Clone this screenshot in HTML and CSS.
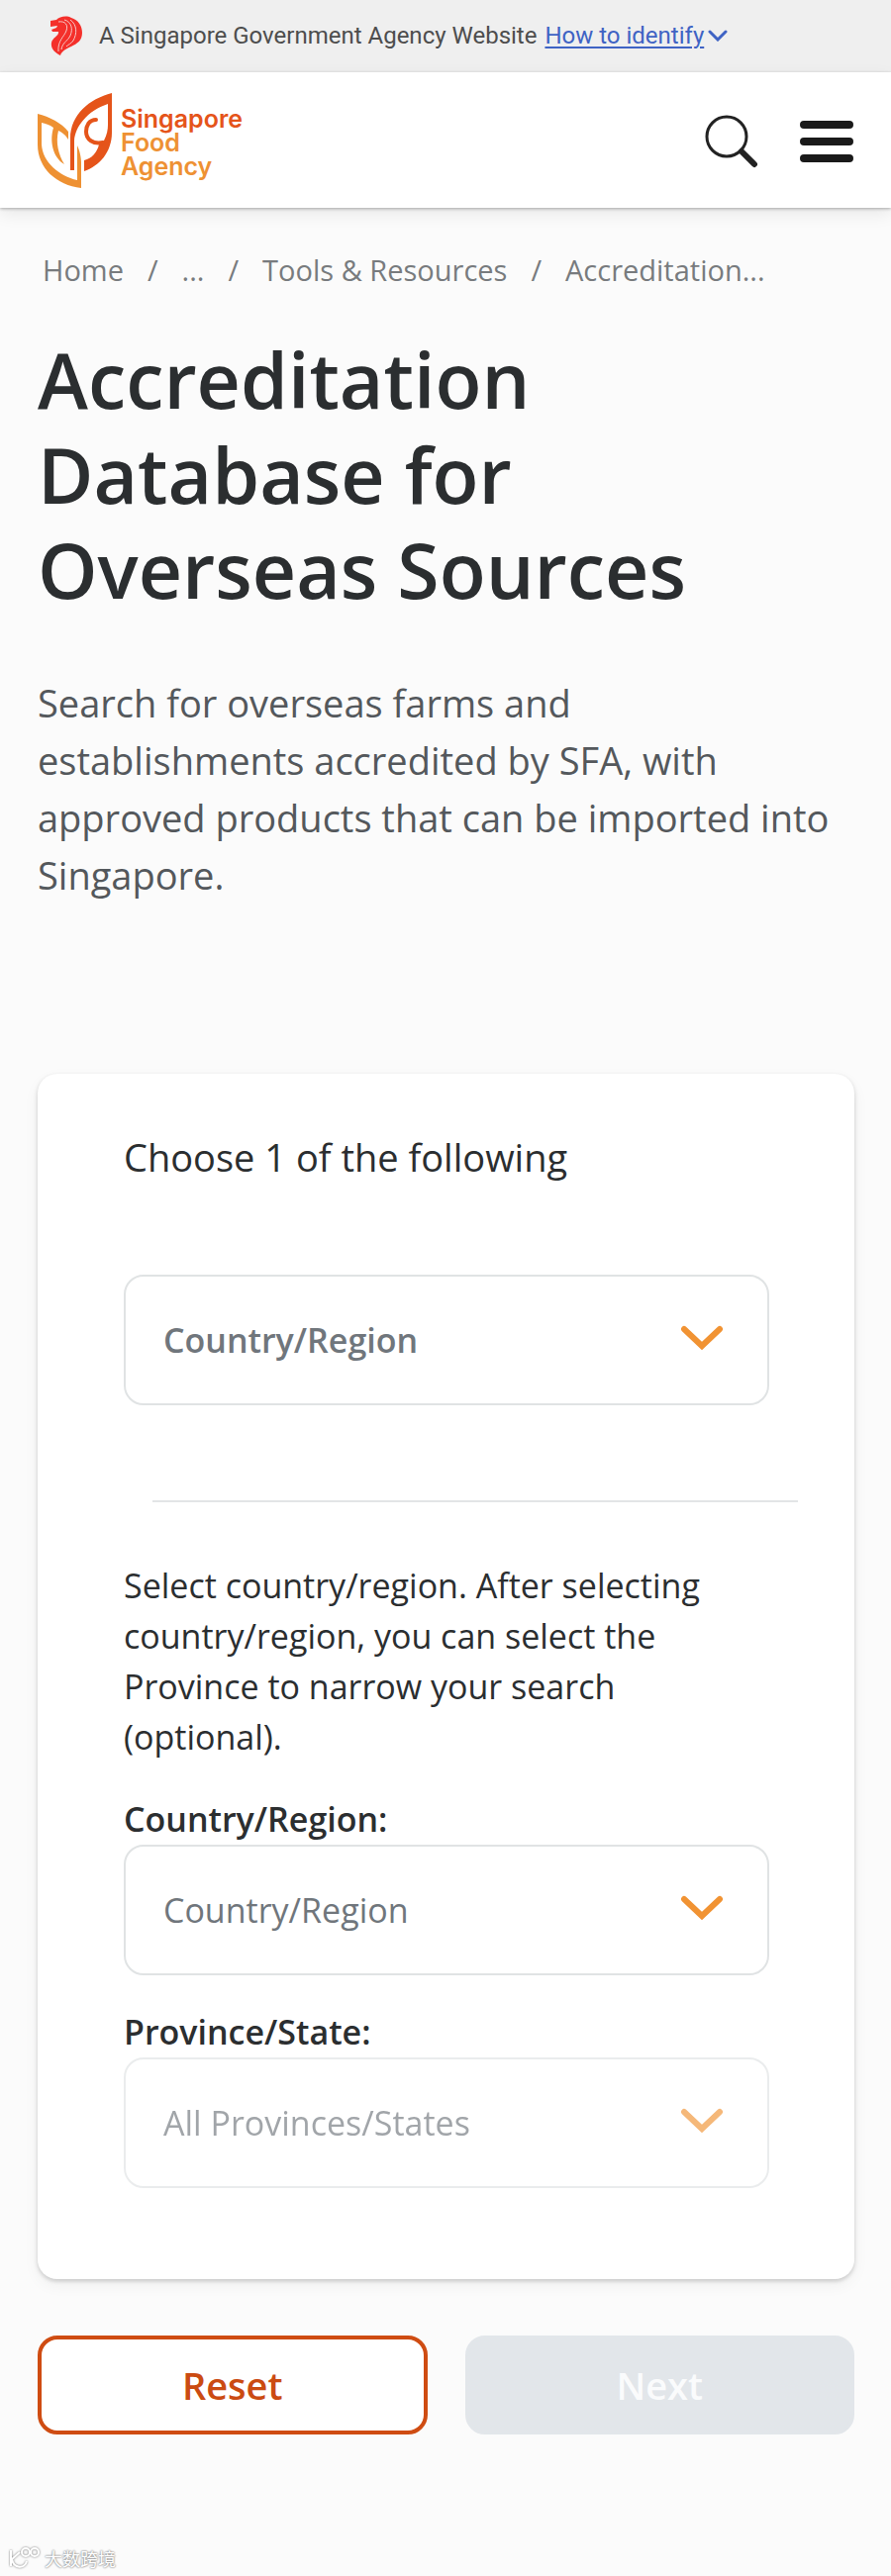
FILE: index.html
```html
<!DOCTYPE html>
<html lang="en">
<head>
<meta charset="utf-8">
<meta name="viewport" content="width=device-width, initial-scale=1">
<title>Accreditation Database for Overseas Sources</title>
<link rel="stylesheet" href="styles.css">
</head>
<body>
<div class="masthead">
  <svg class="masthead-lion" viewBox="0 0 34 40" aria-hidden="true">
    <path fill="#f4302b" d="M1 5 L7 4 C10 1 17 -1 22 2 C29 4 33 10 33 17 C33 25 28 28 22 31 C17 33 12 36 11 40 C5 37 1 33 2 27 C3 22 10 20 9 16 L3 16 L2 14 L7 12 L8 10 L1 11 Z"/>
    <path fill="none" stroke="#f6c9c6" stroke-width="1" d="M9 6 C16 5 19 9 17 15 C15 21 8 25 9 36 M15 4 C22 6 24 13 21 20 C18 26 13 27 12 34 M21 4 C28 9 28 18 24 25 C22 28 19 29 17 31"/>
  </svg>
  <span class="masthead-text">A Singapore Government Agency Website</span>
  <a class="masthead-link" href="#identify">How to identify</a>
  <svg class="masthead-chevron" viewBox="0 0 20 12" aria-hidden="true"><path d="M2 2 L10 10 L18 2"/></svg>
</div>

<header class="header">
  <a class="logo" href="#home" aria-label="Singapore Food Agency">
    <svg class="logo-mark" viewBox="0 0 76 98" aria-hidden="true">
      <path fill="#ee9133" d="M0 21 C12 24 24 30 31 39 L31 47 C28 42 25 40 21 38 C18 50 21 62 27 72 C15 65 12 48 16 35 C12 32 8 31 4 30 L4 52 C5 70 22 84 40 88 L40 53 C42 57 44 64 44 70 L44 96 C19 93 0 76 0 52 Z"/>
      <path fill="#e5541a" d="M75 0 C52 6 33 22 33 46 L33 78 L37 78 L37 48 C38 34 50 18 71 11 L71 32 C71 37 70 42 67 48 L62 52 C60 60 55 66 47 68 L47 79 C62 74 75 60 75 40 Z"/>
      <path fill="none" stroke="#e5541a" stroke-width="4" stroke-linecap="round" d="M59 27 C52 27 49 33 49 39 C49 47 56 52 66 50"/>
    </svg>
    <span class="logo-name"><span class="logo-red">Singapore</span><span>Food</span><span>Agency</span></span>
  </a>
  <div class="header-actions">
    <button class="icon-button" type="button" aria-label="Search">
      <svg class="icon" viewBox="0 0 54 54" aria-hidden="true">
        <circle cx="22" cy="22" r="20" fill="none" stroke="#222" stroke-width="3"/>
        <path d="M37 37 L50 50" stroke="#222" stroke-width="6" stroke-linecap="round"/>
      </svg>
    </button>
    <button class="icon-button" type="button" aria-label="Menu">
      <svg class="icon" viewBox="0 0 54 54" aria-hidden="true">
        <path d="M4 10 H50 M4 27 H50 M4 44 H50" stroke="#1a1a1a" stroke-width="8" stroke-linecap="round"/>
      </svg>
    </button>
  </div>
</header>

<main class="page">
  <nav class="breadcrumb" aria-label="Breadcrumb">
    <a href="#home">Home</a><span>/</span><a href="#more">...</a><span>/</span><a href="#tools">Tools &amp; Resources</a><span>/</span><a href="#accreditation">Accreditation...</a>
  </nav>
  <h1 class="title">Accreditation Database for Overseas Sources</h1>
  <p class="lead">Search for overseas farms and establishments accredited by SFA, with approved products that can be imported into Singapore.</p>

  <form>
    <div class="card">
      <label class="card-heading" for="primary">Choose 1 of the following</label>
      <div class="field">
        <select class="select select-strong" id="primary"><option>Country/Region</option></select>
        <svg class="chevron" viewBox="0 0 44 26" aria-hidden="true"><path d="M4 4 L22 21 L40 4"/></svg>
      </div>
      <hr class="divider">
      <p class="hint">Select country/region. After selecting country/region, you can select the Province to narrow your search (optional).</p>
      <label class="label" for="country">Country/Region:</label>
      <div class="field">
        <select class="select" id="country"><option>Country/Region</option></select>
        <svg class="chevron" viewBox="0 0 44 26" aria-hidden="true"><path d="M4 4 L22 21 L40 4"/></svg>
      </div>
      <label class="label" for="province">Province/State:</label>
      <div class="field field-disabled">
        <select class="select" id="province" disabled><option>All Provinces/States</option></select>
        <svg class="chevron" viewBox="0 0 44 26" aria-hidden="true"><path d="M4 4 L22 21 L40 4"/></svg>
      </div>
    </div>
    <div class="actions">
      <button class="button button-outline" type="reset">Reset</button>
      <button class="button button-muted" type="submit" disabled>Next</button>
    </div>
  </form>
</main>

<footer class="watermark">
  <svg class="watermark-mark" viewBox="0 0 34 22" aria-hidden="true">
    <path d="M3 3 V19 M12 5 L4 12 C6 22 17 22 19 14"/>
    <circle cx="18" cy="5" r="4"/><circle cx="27" cy="5" r="4"/>
  </svg>
  <span lang="zh">大数跨境</span>
</footer>
</body>
</html>
```
FILE: styles.css
```css
* {
  box-sizing: border-box;
}

body {
  margin: 0;
  background: #fbfbfb;
  color: #2b2e30;
  font-family: "Open Sans", "Noto Sans", sans-serif;
}

.masthead {
  display: flex;
  align-items: center;
  height: 73px;
  padding: 0 50px 2px;
  background: #efefef;
  color: #4d4d4d;
  font: 24px/30px Roboto, sans-serif;
  white-space: nowrap;
}

.masthead-lion {
  width: 34px;
  height: 40px;
  margin-right: 16px;
}

.masthead-link {
  margin-left: 8px;
  color: #3f63c4;
  text-underline-offset: 3px;
  text-decoration-thickness: 2px;
}

.masthead-chevron {
  width: 20px;
  height: 12px;
  margin-left: 4px;
  fill: none;
  stroke: #3f63c4;
  stroke-width: 3;
  stroke-linecap: round;
}

.header {
  display: flex;
  align-items: center;
  justify-content: space-between;
  height: 137px;
  padding: 2px 38px 0;
  background: #fff;
  box-shadow: 0 1px 3px rgba(0, 0, 0, 0.3), 0 6px 16px rgba(0, 0, 0, 0.08);
}

.logo {
  display: flex;
  align-items: center;
  gap: 8px;
  color: #ee9133;
  text-decoration: none;
}

.logo-mark {
  width: 76px;
  height: 98px;
}

.logo-name {
  display: flex;
  flex-direction: column;
  padding-top: 2px;
  font: 600 25px/24px Inter, sans-serif;
}

.logo-red {
  color: #e5541a;
}

.header-actions {
  display: flex;
  gap: 42px;
}

.icon-button {
  width: 54px;
  height: 54px;
  padding: 0;
  border: 0;
  background: none;
}

.icon {
  display: block;
  width: 54px;
  height: 54px;
}

.page {
  padding: 41px 37px 0 38px;
}

.breadcrumb {
  display: flex;
  gap: 24px;
  padding-left: 5px;
  color: #787b7e;
  font-size: 29px;
  line-height: 44px;
  white-space: nowrap;
}

.breadcrumb a {
  color: inherit;
  text-decoration: none;
}

.title {
  max-width: 700px;
  margin: 41px 0 57px;
  font-size: 77px;
  font-weight: 600;
  line-height: 96px;
}

.lead {
  max-width: 810px;
  margin: 0 0 172px;
  color: #54585c;
  font-size: 38px;
  line-height: 58px;
}

.card {
  padding: 55px 86px 92px 87px;
  border-radius: 20px;
  background: #fff;
  box-shadow: 0 2px 4px rgba(0, 0, 0, 0.18), 0 6px 16px rgba(0, 0, 0, 0.05);
}

.card-heading {
  display: block;
  margin-bottom: 90px;
  font-size: 38px;
  line-height: 58px;
}

.field {
  position: relative;
}

.field-disabled {
  opacity: 0.65;
}

.select {
  display: block;
  width: 100%;
  height: 132px;
  padding: 0 90px 0 38px;
  border: 2px solid #e0e3e4;
  border-radius: 20px;
  background: #fff;
  color: #70767c;
  font: 34px "Open Sans", "Noto Sans", sans-serif;
  appearance: none;
  opacity: 1;
}

.select-strong {
  font-weight: 600;
}

.chevron {
  position: absolute;
  top: 51px;
  right: 46px;
  width: 44px;
  height: 26px;
  fill: none;
  stroke: #f19333;
  stroke-width: 6;
  stroke-linecap: round;
  pointer-events: none;
}

.divider {
  height: 2px;
  margin: 96px -29px 59px 29px;
  border: 0;
  background: #e3e5e6;
}

.hint {
  margin: 0;
  font-size: 34px;
  line-height: 51px;
}

.label {
  display: block;
  margin-top: 32px;
  font-size: 34px;
  font-weight: 600;
  line-height: 51px;
}

.actions {
  display: grid;
  grid-template-columns: 1fr 1fr;
  gap: 38px;
  margin-top: 57px;
}

.button {
  height: 100px;
  border: 4px solid #e2e6ea;
  border-radius: 20px;
  font: 600 38px "Open Sans", "Noto Sans", sans-serif;
}

.button-outline {
  border-color: #cf4c12;
  background: #fff;
  color: #cb4b12;
}

.button-muted {
  background: #e2e6ea;
  color: #fafbfc;
}

.watermark {
  display: flex;
  align-items: center;
  gap: 3px;
  margin-top: 112px;
  padding: 0 8px 3px;
  color: #fff;
  font: 18px/26px "Noto Sans CJK SC", sans-serif;
  text-shadow: 0 0 2px #888, 0 0 2px #888;
}

.watermark-mark {
  width: 34px;
  height: 22px;
  overflow: visible;
  fill: none;
  stroke: #fff;
  stroke-width: 2;
  filter: drop-shadow(0 0 1px #777);
}
```
